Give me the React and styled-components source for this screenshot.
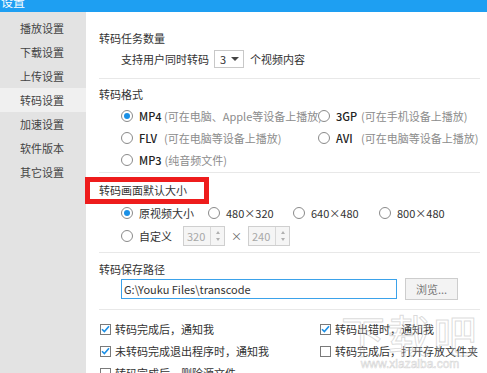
import React from "react";
import styled, { createGlobalStyle } from "styled-components";

const Global = createGlobalStyle`
  html, body { margin: 0; padding: 0; background: #fff; overflow: hidden; }
  body { font-family: "Noto Sans CJK SC", "Noto Sans", sans-serif; font-size: 11px; color: #333; }
  * { box-sizing: border-box; }
`;

const Window = styled.div`
  width: 487px;
  height: 373px;
  display: flex;
  flex-direction: column;
  overflow: hidden;
  position: relative;
`;

const TitleBar = styled.div`
  height: 12px;
  flex: none;
  background: #1e9ff2;
  overflow: hidden;
  padding-left: 1px;
`;

const TitleText = styled.div`
  color: #fff;
  font-size: 12px;
  line-height: 16px;
  margin-top: -6px;
`;

const Body = styled.div`
  flex: 1;
  display: flex;
  min-height: 0;
`;

const Sidebar = styled.div`
  width: 86px;
  flex: none;
  background: #e3e3e3;
  padding-top: 4px;
  display: flex;
  flex-direction: column;
`;

const NavItem = styled.div`
  height: 24px;
  line-height: 24px;
  padding-left: 20px;
  color: #444;
  background: ${(p) => (p.$active ? "#f0f0f0" : "transparent")};
`;

const Content = styled.div`
  flex: 1;
  padding: 0 7px 0 13px;
  display: flex;
  flex-direction: column;
`;

const Section = styled.div`
  padding-top: ${(p) => p.$pt}px;
  padding-bottom: ${(p) => p.$pb}px;
  border-bottom: ${(p) => (p.$last ? "none" : "1px solid #e8e8e8")};
`;

const Heading = styled.div`
  height: 16px;
  line-height: 16px;
  color: #333;
  margin-bottom: ${(p) => p.$mb || 0}px;
  position: relative;
`;

const Highlight = styled.span`
  position: absolute;
  left: -14px;
  top: -5px;
  width: 124px;
  height: 27px;
  border: 5px solid #ee1c1c;
  pointer-events: none;
`;

const Row = styled.div`
  display: flex;
  align-items: center;
  height: ${(p) => p.$h || 22}px;
  padding-left: ${(p) => p.$indent || 0}px;
`;

const Select = styled.div`
  width: 30px;
  height: 18px;
  border: 1px solid #c8c8c8;
  display: flex;
  align-items: center;
  justify-content: space-between;
  padding: 0 4px 0 5px;
  margin: 0 6px 0 5px;
`;

const Caret = styled.span`
  width: 0;
  height: 0;
  border-left: 4px solid transparent;
  border-right: 4px solid transparent;
  border-top: 4px solid #444;
`;

const OptionGrid = styled.div`
  display: grid;
  grid-template-columns: ${(p) => p.$cols};
  grid-auto-rows: ${(p) => p.$rowH || 22}px;
  padding-left: ${(p) => p.$indent || 0}px;
`;

const Option = styled.div`
  display: flex;
  align-items: center;
  white-space: nowrap;
`;

const Radio = styled.span`
  width: 12px;
  height: 12px;
  flex: none;
  border-radius: 50%;
  border: 1px solid #8a8a8a;
  margin-right: 6px;
  display: flex;
  align-items: center;
  justify-content: center;
  background: #fff;
  &::after {
    content: "";
    width: 6px;
    height: 6px;
    border-radius: 50%;
    background: ${(p) => (p.$on ? "#1a90e6" : "transparent")};
  }
`;

const FormatName = styled.span`
  display: inline-block;
  min-width: 22px;
  margin-right: 3px;
  color: #222;
  font-weight: 500;
`;

const Hint = styled.span`
  color: #8c8c8c;
`;

const Spin = styled.div`
  width: 42px;
  height: 20px;
  border: 1px solid #cfcfcf;
  background: #f5f5f5;
  display: flex;
`;

const SpinValue = styled.span`
  flex: 1;
  color: #a8a8a8;
  line-height: 18px;
  padding-left: 3px;
`;

const SpinArrows = styled.span`
  width: 14px;
  border-left: 1px solid #d8d8d8;
  display: flex;
  flex-direction: column;
  align-items: center;
  justify-content: space-around;
  padding: 2px 0;
`;

const Arrow = styled.span`
  width: 0;
  height: 0;
  border-left: 2.5px solid transparent;
  border-right: 2.5px solid transparent;
  ${(p) => (p.$up ? "border-bottom: 3px solid #b0b0b0;" : "border-top: 3px solid #b0b0b0;")}
`;

const Times = styled.span`
  color: #666;
  margin: 0 6px;
`;

const Spacer = styled.span`
  width: ${(p) => p.$w}px;
  flex: none;
`;

const PathInput = styled.div`
  width: 276px;
  height: 20px;
  border: 1px solid #3ba2ea;
  line-height: 18px;
  padding-left: 2px;
  color: #333;
`;

const Button = styled.div`
  width: 53px;
  height: 22px;
  margin-left: 8px;
  border: 1px solid #cdcdcd;
  background: #f3f3f3;
  color: #777;
  display: flex;
  align-items: center;
  justify-content: center;
`;

const Check = styled.span`
  width: 11px;
  height: 11px;
  flex: none;
  border: 1px solid #7a7a7a;
  margin-right: 4px;
  background: #fff;
  display: flex;
  align-items: center;
  justify-content: center;
`;

const Watermark = styled.div`
  position: absolute;
  right: 8px;
  bottom: 2px;
  display: flex;
  flex-direction: column;
  align-items: center;
  pointer-events: none;
`;

const WmBig = styled.div`
  font-size: 44px;
  line-height: 46px;
  letter-spacing: 2px;
  color: rgba(255, 255, 255, 0.2);
  -webkit-text-stroke: 1px rgba(150, 150, 150, 0.35);
`;

const WmSmall = styled.div`
  font-family: "Liberation Sans", sans-serif;
  font-size: 12px;
  color: rgba(255, 255, 255, 0.2);
  -webkit-text-stroke: 0.6px rgba(150, 150, 150, 0.4);
`;

const Tick = () => (
  <svg width="9" height="8" viewBox="0 0 9 8">
    <path d="M1 4.2 L3.4 6.6 L8 1.2" fill="none" stroke="#1a8fe6" strokeWidth="1.6" />
  </svg>
);

const CheckItem = ({ on, children }) => (
  <Option>
    <Check>{on && <Tick />}</Check>
    {children}
  </Option>
);

const RadioItem = ({ on, children }) => (
  <Option>
    <Radio $on={on} />
    {children}
  </Option>
);

const SpinBox = ({ value }) => (
  <Spin>
    <SpinValue>{value}</SpinValue>
    <SpinArrows>
      <Arrow $up />
      <Arrow />
    </SpinArrows>
  </Spin>
);

const nav = ["播放设置", "下载设置", "上传设置", "转码设置", "加速设置", "软件版本", "其它设置"];

export default function App() {
  return (
    <Window>
      <Global />
      <TitleBar>
        <TitleText>设置</TitleText>
      </TitleBar>
      <Body>
        <Sidebar>
          {nav.map((n) => (
            <NavItem key={n} $active={n === "转码设置"}>
              {n}
            </NavItem>
          ))}
        </Sidebar>
        <Content>
          <Section $pt={18} $pb={10}>
            <Heading $mb={3}>转码任务数量</Heading>
            <Row $h={19} $indent={22}>
              支持用户同时转码
              <Select>
                <span>3</span>
                <Caret />
              </Select>
              个视频内容
            </Row>
          </Section>

          <Section $pt={7} $pb={1}>
            <Heading $mb={3}>转码格式</Heading>
            <OptionGrid $cols="197px 1fr" $indent={22}>
              <RadioItem on>
                <FormatName>MP4</FormatName>
                <Hint>(可在电脑、Apple等设备上播放)</Hint>
              </RadioItem>
              <RadioItem>
                <FormatName>3GP</FormatName>
                <Hint>(可在手机设备上播放)</Hint>
              </RadioItem>
              <RadioItem>
                <FormatName>FLV</FormatName>
                <Hint>(可在电脑等设备上播放)</Hint>
              </RadioItem>
              <RadioItem>
                <FormatName>AVI</FormatName>
                <Hint>(可在电脑等设备上播放)</Hint>
              </RadioItem>
              <RadioItem>
                <FormatName>MP3</FormatName>
                <Hint>(纯音频文件)</Hint>
              </RadioItem>
            </OptionGrid>
          </Section>

          <Section $pt={9} $pb={5}>
            <Heading $mb={3}>
              转码画面默认大小
              <Highlight />
            </Heading>
            <OptionGrid $cols="87px 85px 86px 1fr" $indent={22} $rowH={23}>
              <RadioItem on>原视频大小</RadioItem>
              <RadioItem>480×320</RadioItem>
              <RadioItem>640×480</RadioItem>
              <RadioItem>800×480</RadioItem>
            </OptionGrid>
            <Row $h={23} $indent={22}>
              <RadioItem>自定义</RadioItem>
              <Spacer $w={11} />
              <SpinBox value="320" />
              <Times>×</Times>
              <SpinBox value="240" />
            </Row>
          </Section>

          <Section $pt={8} $pb={9}>
            <Heading $mb={1}>转码保存路径</Heading>
            <Row $h={22} $indent={22}>
              <PathInput>G:\Youku Files\transcode</PathInput>
              <Button>浏览...</Button>
            </Row>
          </Section>

          <Section $pt={8} $pb={0} $last>
            <OptionGrid $cols="220px 1fr" $indent={1}>
              <CheckItem on>转码完成后，通知我</CheckItem>
              <CheckItem on>转码出错时，通知我</CheckItem>
              <CheckItem on>未转码完成退出程序时，通知我</CheckItem>
              <CheckItem>转码完成后，打开存放文件夹</CheckItem>
              <CheckItem>转码完成后，删除源文件</CheckItem>
            </OptionGrid>
          </Section>
        </Content>
      </Body>
      <Watermark>
        <WmBig>下载吧</WmBig>
        <WmSmall>www.xiazaiba.com</WmSmall>
      </Watermark>
    </Window>
  );
}
